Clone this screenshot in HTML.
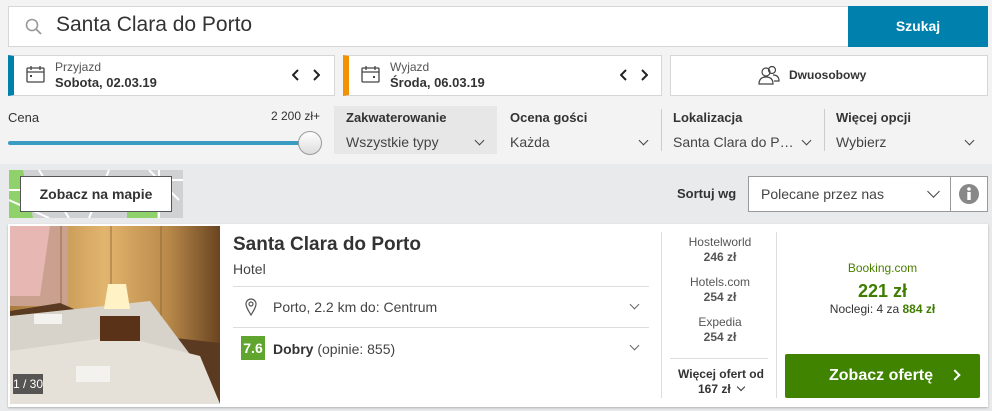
<!DOCTYPE html>
<html><head><meta charset="utf-8"><style>
*{box-sizing:border-box;margin:0;padding:0}
body{width:992px;height:411px;overflow:hidden;font-family:"Liberation Sans",Arial,sans-serif;background:#e9eaec;color:#333;position:relative}
.top{position:absolute;left:0;top:0;width:992px;height:164px;background:#f3f3f3}
.abs{position:absolute}
.box{position:absolute;background:#fff;border:1px solid #d6d6d6}
.b{font-weight:bold}
.chev{position:absolute;width:7px;height:7px;border-right:1.6px solid #444;border-bottom:1.6px solid #444;transform:rotate(45deg)}
</style></head><body>
<div class="top"></div>
<div class="box" style="left:8px;top:6px;width:841px;height:41px"></div>
<svg class="abs" style="left:25px;top:18px" width="18" height="18" viewBox="0 0 18 18"><circle cx="7" cy="7" r="5.5" fill="none" stroke="#999" stroke-width="1.6"/><path d="M11 11l5 5" stroke="#999" stroke-width="1.8"/></svg>
<div class="abs" style="left:56px;top:13px;font-size:21px;color:#333">Santa Clara do Porto</div>
<div class="abs b" style="left:848px;top:6px;width:140px;height:41px;background:#0080ad;color:#fff;font-size:14px;line-height:41px;text-align:center">Szukaj</div>

<div class="box" style="left:8px;top:55px;width:327px;height:41px;border-left:6px solid #0080ad"></div>
<svg class="abs" style="left:26px;top:66px" width="19" height="17" viewBox="0 0 19 17"><rect x="1" y="2" width="17" height="14" rx="1" fill="none" stroke="#444" stroke-width="1.3"/><path d="M1 6h17M5 0v4M14 0v4" stroke="#444" stroke-width="1.3"/><rect x="4" y="9" width="2" height="2" fill="#444"/></svg>
<div class="abs" style="left:55px;top:60px;font-size:12px;color:#555">Przyjazd</div>
<div class="abs b" style="left:55px;top:75px;font-size:13px">Sobota, 02.03.19</div>
<svg class="abs" style="left:292px;top:68px" width="28" height="14" viewBox="0 0 28 14"><path d="M6 2L1 7l5 5M22 2l5 5-5 5" fill="none" stroke="#222" stroke-width="2"/></svg>

<div class="box" style="left:343px;top:55px;width:319px;height:41px;border-left:6px solid #f39200"></div>
<svg class="abs" style="left:361px;top:66px" width="19" height="17" viewBox="0 0 19 17"><rect x="1" y="2" width="17" height="14" rx="1" fill="none" stroke="#444" stroke-width="1.3"/><path d="M1 6h17M5 0v4M14 0v4" stroke="#444" stroke-width="1.3"/><rect x="12" y="10" width="2" height="2" fill="#444"/></svg>
<div class="abs" style="left:390px;top:60px;font-size:12px;color:#555">Wyjazd</div>
<div class="abs b" style="left:390px;top:75px;font-size:13px">Środa, 06.03.19</div>
<svg class="abs" style="left:620px;top:68px" width="28" height="14" viewBox="0 0 28 14"><path d="M6 2L1 7l5 5M22 2l5 5-5 5" fill="none" stroke="#222" stroke-width="2"/></svg>

<div class="box" style="left:670px;top:55px;width:318px;height:41px"></div>
<svg class="abs" style="left:758px;top:65px" width="22" height="20" viewBox="0 0 22 20"><circle cx="8" cy="7" r="4" fill="none" stroke="#444" stroke-width="1.2"/><path d="M1 19c0-5 3-7 7-7s7 2 7 7z" fill="none" stroke="#444" stroke-width="1.2"/><circle cx="14" cy="5" r="3.5" fill="none" stroke="#444" stroke-width="1.2"/><path d="M15 10c4 0 6 2 6 6h-5" fill="none" stroke="#444" stroke-width="1.2"/></svg>
<div class="abs b" style="left:789px;top:68px;font-size:12px">Dwuosobowy</div>

<div class="abs" style="left:8px;top:110px;font-size:13px">Cena</div>
<div class="abs" style="left:271px;top:109px;font-size:12px">2 200 zł+</div>
<div class="abs" style="left:8px;top:141px;width:300px;height:4px;background:#3a9cc2;border-radius:2px"></div>
<div class="abs" style="left:298px;top:131px;width:24px;height:24px;border-radius:50%;background:linear-gradient(#fff,#ddd);border:1px solid #999"></div>

<div class="abs" style="left:334px;top:106px;width:163px;height:48px;background:#e7e7e7"></div>
<div class="abs b" style="left:346px;top:110px;font-size:13px">Zakwaterowanie</div>
<div class="abs" style="left:346px;top:134px;font-size:14px;color:#444">Wszystkie typy</div>
<div class="chev" style="left:476px;top:137px"></div>

<div class="abs b" style="left:510px;top:110px;font-size:13px">Ocena gości</div>
<div class="abs" style="left:510px;top:134px;font-size:14px;color:#444">Każda</div>
<div class="chev" style="left:640px;top:137px"></div>
<div class="abs" style="left:661px;top:109px;width:1px;height:42px;background:#ccc"></div>
<div class="abs b" style="left:673px;top:110px;font-size:13px">Lokalizacja</div>
<div class="abs" style="left:673px;top:134px;font-size:14px;color:#444">Santa Clara do P…</div>
<div class="chev" style="left:803px;top:137px"></div>
<div class="abs" style="left:824px;top:109px;width:1px;height:42px;background:#ccc"></div>
<div class="abs b" style="left:836px;top:110px;font-size:13px">Więcej opcji</div>
<div class="abs" style="left:836px;top:134px;font-size:14px;color:#444">Wybierz</div>
<div class="chev" style="left:966px;top:137px"></div>

<svg class="abs" style="left:9px;top:170px" width="174" height="48" viewBox="0 0 174 48"><rect width="174" height="48" fill="#cfd1d3"/><path d="M0 0h14l10 48h-24z" fill="#8fd16a"/><path d="M118 36h30v12h-30z" fill="#8fd16a"/><path d="M0 30l40 18M30 0l30 48M100 0l-20 48M140 0l30 30M60 10h114M0 20h60M150 0v48" stroke="#fff" stroke-width="2" fill="none"/></svg>
<div class="abs b" style="left:20px;top:176px;width:152px;height:36px;background:#fff;border:1px solid #555;font-size:14px;text-align:center;line-height:34px">Zobacz na mapie</div>

<div class="abs b" style="left:677px;top:186px;font-size:13px">Sortuj wg</div>
<div class="box" style="left:748px;top:176px;width:203px;height:36px;border-color:#999"></div>
<div class="abs" style="left:761px;top:186px;font-size:14px;color:#444">Polecane przez nas</div>
<div class="chev" style="left:929px;top:187px;width:9px;height:9px"></div>
<div class="box" style="left:950px;top:176px;width:38px;height:36px;border-color:#999"></div>
<svg class="abs" style="left:959px;top:184px" width="20" height="20" viewBox="0 0 20 20"><circle cx="10" cy="10" r="10" fill="#888"/><circle cx="10" cy="5" r="1.8" fill="#fff"/><rect x="8.3" y="8" width="3.4" height="8" fill="#fff"/></svg>

<div class="abs" style="left:8px;top:224px;width:980px;height:183px;background:#fff;box-shadow:0 1px 2px rgba(0,0,0,.25)"></div>
<svg class="abs" style="left:10px;top:226px" width="210" height="178" viewBox="0 0 210 178">
<defs><linearGradient id="w" x1="0" x2="1"><stop offset="0" stop-color="#a87a3e"/><stop offset=".45" stop-color="#e2b56e"/><stop offset=".75" stop-color="#b98a4a"/><stop offset="1" stop-color="#6a4422"/></linearGradient></defs>
<rect width="210" height="178" fill="url(#w)"/>
<rect width="58" height="80" fill="#caa08e"/>
<path d="M0 0h40l-10 70h-30z" fill="#e7b7b3"/>
<rect x="50" y="0" width="2" height="178" fill="#8a6035" opacity=".4"/>
<rect x="100" y="0" width="2" height="178" fill="#8a6035" opacity=".4"/>
<rect x="150" y="0" width="2" height="178" fill="#8a6035" opacity=".4"/>
<path d="M0 85l50-8 70 30 90 10v61h-210z" fill="#5a3a20"/>
<path d="M0 90l140-15 60 80 10 23h-210z" fill="#d8d3ca"/>
<path d="M0 125l110-15 80 20 20 48h-210z" fill="#e6e1d8"/>
<rect x="90" y="90" width="40" height="25" fill="#5a3218"/>
<path d="M98 58h18l4 25h-26z" fill="#fff2c4"/>
<rect x="66" y="140" width="34" height="16" fill="#f4f2ee"/>
<rect x="24" y="88" width="28" height="10" fill="#f4f2ee"/>
</svg>
<div class="abs" style="left:13px;top:374px;width:30px;height:20px;background:rgba(60,60,60,.85);color:#fff;font-size:12px;text-align:center;line-height:20px;white-space:nowrap">1 / 30</div>

<div class="abs b" style="left:233px;top:234px;font-size:19px;color:#333">Santa Clara do Porto</div>
<div class="abs" style="left:233px;top:261px;font-size:14px;color:#444">Hotel</div>
<div class="abs" style="left:233px;top:286px;width:416px;height:1px;background:#ddd"></div>
<svg class="abs" style="left:245px;top:298px" width="12" height="18" viewBox="0 0 12 18"><path d="M6 17C3 12 1 9 1 6a5 5 0 0 1 10 0c0 3-2 6-5 11z" fill="none" stroke="#555" stroke-width="1.2"/><circle cx="6" cy="6" r="2" fill="none" stroke="#555" stroke-width="1.2"/></svg>
<div class="abs" style="left:273px;top:299px;font-size:14px;color:#444">Porto, 2.2 km do: Centrum</div>
<div class="chev" style="left:631px;top:301px;border-color:#666"></div>
<div class="abs" style="left:233px;top:327px;width:416px;height:1px;background:#ddd"></div>
<div class="abs b" style="left:241px;top:336px;width:24px;height:24px;background:#5fa52e;color:#fff;font-size:14px;text-align:center;line-height:24px">7.6</div>
<div class="abs" style="left:273px;top:341px;font-size:14px;color:#444"><b style="color:#333">Dobry</b> (opinie: 855)</div>
<div class="chev" style="left:631px;top:342px;border-color:#666"></div>

<div class="abs" style="left:661px;top:232px;width:1px;height:166px;background:#ddd"></div>
<div class="abs" style="left:776px;top:232px;width:1px;height:166px;background:#ddd"></div>
<div class="abs" style="left:670px;top:235px;width:100px;text-align:center;font-size:12px;color:#555;line-height:15px">Hostelworld<br><b>246 zł</b></div>
<div class="abs" style="left:670px;top:275px;width:100px;text-align:center;font-size:12px;color:#555;line-height:15px">Hotels.com<br><b>254 zł</b></div>
<div class="abs" style="left:670px;top:315px;width:100px;text-align:center;font-size:12px;color:#555;line-height:15px">Expedia<br><b>254 zł</b></div>
<div class="abs" style="left:670px;top:358px;width:98px;height:1px;background:#ddd"></div>
<div class="abs b" style="left:666px;top:367px;width:110px;text-align:center;font-size:12px;color:#333;line-height:15px">Więcej ofert od<br>167 zł <span style="display:inline-block;width:6px;height:6px;border-right:1.6px solid #333;border-bottom:1.6px solid #333;transform:rotate(45deg);margin:0 0 3px 4px"></span></div>

<div class="abs" style="left:785px;top:261px;width:195px;text-align:center;font-size:12px;color:#4a7f00">Booking.com</div>
<div class="abs b" style="left:785px;top:281px;width:195px;text-align:center;font-size:18px;color:#3e7d00">221 zł</div>
<div class="abs" style="left:785px;top:302px;width:195px;text-align:center;font-size:12px;color:#333">Noclegi: 4 za <b style="color:#3e7d00">884 zł</b></div>
<div class="abs b" style="left:785px;top:354px;width:195px;height:44px;background:#3f8300;border-radius:2px;color:#fff;font-size:16px;line-height:44px;padding-left:44px">Zobacz ofertę</div>
<div class="abs" style="left:951px;top:371px;width:8px;height:8px;border-right:2px solid #fff;border-top:2px solid #fff;transform:rotate(45deg)"></div>
</body></html>
